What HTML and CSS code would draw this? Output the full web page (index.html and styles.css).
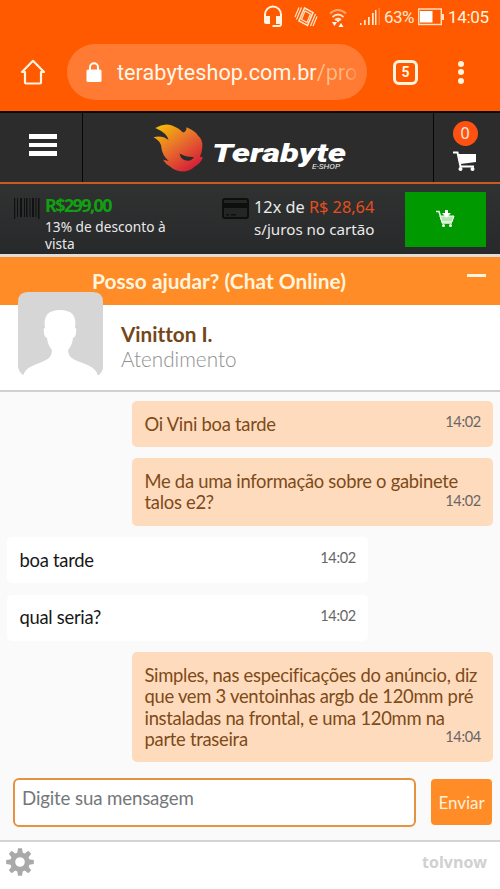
FILE: index.html
```html
<!DOCTYPE html>
<html lang="pt-BR">
<head>
<meta charset="utf-8">
<title>Terabyte Shop</title>
<link rel="stylesheet" href="styles.css">
</head>
<body>
<div class="browser">
  <div class="status">
    <svg class="st-head" width="20" height="23" viewBox="0 0 20 23"><path d="M2 14V9.500a8 8 0 0 1 16 0V19q0 2-2 2H9.500" fill="none" stroke="#fff4df" stroke-width="2"/><path d="M1 11h6v8H3q-2 0-2-2zM13 11h6v8h-6z" fill="#fff4df"/></svg>
    <svg class="st-vib" width="24" height="22" viewBox="0 0 24 22" fill="none" stroke="#ffe5c9" stroke-width="1.200"><path d="M10.500 2 19 6.500 13.500 19.500 5 15z" stroke-width="1.600"/><path d="M11 5 16.500 8 13 16.500 7.500 13.500zM7.500 1.500 2.500 13.500M5 1.500 1 11M16.500 20 21.500 8M19 20 23 10.500"/></svg>
    <svg class="st-wifi" width="18" height="22" viewBox="0 0 18 22" fill="none" stroke="#ffe5c9" stroke-width="1.700"><path d="M1 5.500q8-7 16 0" opacity=".55"/><path d="M3.500 9q5.500-5 11 0M6 12q3-2.500 6 0"/><path d="M3 14h5l-2.500 4zM9.500 19l2.500-4 2.500 4zM7 12h4l-2 2.500z" fill="#fff" stroke="none"/></svg>
    <svg class="st-sig" width="20" height="18" viewBox="0 0 20 18" fill="#ffe8d0"><path d="M0 15h1.500v2H0zM4 12h1.700v5H4zM8 9h1.700v8H8zM12 5h1.700v12H12zM15 2h1.500v15H15z"/><path d="M18.500 0H20v17h-1.500z" opacity=".3"/></svg>
    <span class="pct">63%</span>
    <svg class="st-bat" width="26" height="18" viewBox="0 0 26 18"><rect x=".7" y="1" width="22.600" height="15.500" fill="none" stroke="#ffe0c0" stroke-width="1.400"/><path d="M2 3h12.500v11.500H2z" fill="#fff"/><path d="M24 6h2v6h-2z" fill="#ffe0c0"/></svg>
    <span class="clock">14:05</span>
  </div>
  <div class="toolbar">
    <svg class="home" width="26" height="26" viewBox="0 0 26 26" fill="none" stroke="#fff4df" stroke-width="2.200" stroke-linejoin="round" stroke-linecap="round"><path d="M2 13 13 1.800 24 13h-3v10.500q0 1-1 1H6q-1 0-1-1V13z"/></svg>
    <div class="pill">
      <svg width="16" height="21" viewBox="0 0 16 21"><path d="M4 9V5.300a4 4 0 0 1 8 0V9" fill="none" stroke="#fff" stroke-width="2"/><rect x=".5" y="7.500" width="15" height="12.500" rx="1.500" fill="#fff"/></svg>
      <span class="url">terabyteshop.com.br<i>/pro</i></span>
    </div>
    <span class="tabs">5</span>
    <span class="dots"><b></b><b></b><b></b></span>
  </div>
</div>
<div class="site">
  <div class="menu"><span class="burger"><b></b><b></b><b></b></span></div>
  <div class="brand">
    <svg width="196" height="52" viewBox="0 0 196 52">
      <defs><linearGradient id="fire" x1="0" y1="0" x2=".75" y2="1"><stop offset="0" stop-color="#f8c800"/><stop offset=".5" stop-color="#e8702c"/><stop offset="1" stop-color="#d51c38"/></linearGradient></defs>
      <path d="M2.300 5Q11-.5 19 2.500 26 5 30 9.500 34 8.500 33.300 4.300 42 7.500 45 12.500 50 17 49.300 24 49 30 47 33.500L50 34.500Q47 41 41.700 43.500 37 48.500 29 48.500 22 48 17 43.500 12.500 41 10 36.700L15.700 38Q9 32 8.500 25 8 18 .5 14.300 9 12 15.500 17 14 10 2.300 5z" fill="url(#fire)"/>
      <path d="M26.500 30.500q7 4 14.500 3.500-2 3.500-6 3.700-7 0-8.500-7.200z" fill="#292a2b"/>
      <text class="wordmark" x="59" y="39" textLength="134" lengthAdjust="spacingAndGlyphs">Terabyte</text>
      <text class="eshop" x="159" y="45.500" textLength="28" lengthAdjust="spacingAndGlyphs">E-SHOP</text>
    </svg>
  </div>
  <div class="cart">
    <span class="count">0</span>
    <svg width="24" height="21" viewBox="0 0 24 21"><path d="M0 1.500h4.500l3 14H21" fill="none" stroke="#fff" stroke-width="2"/><path d="M5.500 3H23v8L7.500 13z" fill="#fff"/><circle cx="7.500" cy="18" r="2" fill="#fff"/><circle cx="19.500" cy="18" r="2" fill="#fff"/></svg>
  </div>
</div>
<div class="offer">
  <svg class="barcode" width="26" height="21" viewBox="0 0 26 21"><path d="M0 0h1.200v21H0zM3 0h1v19H3zM6 0h2v19H6zM10 0h1v19h-1zM12 0h1.500v19H12zM15.500 0h1v19h-1zM18 0h2v19h-2zM21.500 0h1v19h-1zM24 0h1.500v21H24z" fill="#101112"/></svg>
  <div class="cash"><strong>R$299,00</strong><span>13% de desconto à<br>vista</span></div>
  <svg class="card" width="27" height="21" viewBox="0 0 27 21"><rect x="1" y="1" width="25" height="19" rx="2" fill="#242525" stroke="#0d0e0e" stroke-width="2"/><path d="M1 5h25v5H1zM4 16h3v1.500H4zM9 16h5v1.500H9z" fill="#0d0e0e"/></svg>
  <div class="parcel">12x de <em>R$ 28,64</em><br><span>s/juros no cartão</span></div>
  <div class="buy"><svg width="20" height="18" viewBox="0 0 20 18"><path d="M0 1.500h3l3.500 11.500H16" fill="none" stroke="#e9ffe5" stroke-width="1.600"/><path d="M4 6h14l-2 6H6z" fill="#b5e5b0" stroke="#fff" stroke-width="1"/><path d="M9 0h3v3h3l-4.500 5L6 3h3z" fill="#fff"/><circle cx="7.500" cy="15.500" r="1.500" fill="#fff"/><circle cx="14.500" cy="15.500" r="1.500" fill="#fff"/></svg></div>
</div>
<div class="chat-title"><span>Posso ajudar? (Chat Online)</span><b></b></div>
<div class="agent">
  <svg class="avatar" width="85" height="84" viewBox="0 0 85 84"><path d="M10 0h65q10 0 10 10v65q0 4-4 8H5q-5-4-5-9V10Q0 0 10 0z" fill="#d6d6d6"/><path d="M5 84c2-9 12-11 21-15q8-3 8-11-4-4-5-12-3-1-3-6-1-4 1-4-3-18 15-18 18 0 15 18 2 0 1 4 0 5-3 6-1 8-5 12 0 7 7 10c9 4 21 6 23 16z" fill="#fff"/></svg>
  <div class="who"><strong>Vinitton I.</strong><span>Atendimento</span></div>
</div>
<div class="chat">
  <div class="msg me">Oi Vini boa tarde<time>14:02</time></div>
  <div class="msg me long">Me da uma informação sobre o gabinete<br>talos e2?<time>14:02</time></div>
  <div class="msg">boa tarde<time>14:02</time></div>
  <div class="msg">qual seria?<time>14:02</time></div>
  <div class="msg me long">Simples, nas especificações do anúncio, diz<br>que vem 3 ventoinhas argb de 120mm pré<br>instaladas na frontal, e uma 120mm na<br>parte traseira<time>14:04</time></div>
  <div class="compose"><div class="field">Digite sua mensagem</div><div class="send">Enviar</div></div>
</div>
<div class="foot">
  <svg width="28" height="28" viewBox="-14 -14 28 28" fill="#a9a9a9"><circle r="7.300" fill="none" stroke="#a9a9a9" stroke-width="5"/><g id="t"><path d="M-2.800-9-2-13.800H2L2.800-9zM-2.800 9-2 13.800H2L2.800 9zM-9-2.800-13.800-2V2L-9 2.800zM9-2.800 13.800-2V2L9 2.800z"/></g><use href="#t" transform="rotate(45)"/></svg>
  <span>tolvnow</span>
</div>
</body>
</html>
```
FILE: styles.css
```css
* { box-sizing: border-box; }
body { margin: 0; width: 500px; height: 889px; overflow: hidden; background: #fff; font-family: Lato, sans-serif; display: flex; flex-direction: column; }
body > div { flex-shrink: 0; }
svg { display: block; flex: none; }

.browser { height: 111px; background: #ff5a00; font-family: Roboto, sans-serif; color: #fff4df; }
.status { height: 44px; padding: 5px 0 0 263px; display: flex; align-items: flex-start; }
.st-vib { margin: 1px 0 0 11px; }
.st-wifi { margin: 3px 0 0 11px; }
.st-sig { margin: 3px 0 0 13px; }
.pct, .clock { font-size: 17px; line-height: 25px; white-space: nowrap; }
.pct { width: 30px; margin-left: 4px; letter-spacing: -.6px; color: #ffe9cf; }
.st-bat { margin: 3px 0 0 4px; }
.clock { margin-left: 4px; letter-spacing: -.3px; }
.toolbar { display: flex; align-items: center; height: 56px; padding-left: 20px; }
.pill { width: 300px; height: 56px; margin-left: 21px; padding-left: 19px; border-radius: 28px; background: #ff7a33; display: flex; align-items: center; }
.url { width: 239px; margin-left: 15px; overflow: hidden; white-space: nowrap; font-size: 21.6px; line-height: 30px; padding-top: 2px; color: #fff8e8; letter-spacing: .05px; }
.url i { font-style: normal; background: linear-gradient(90deg, #ffc18c, #ffb47c 75%, #ff8a4a); background-clip: text; color: transparent; }
.tabs { width: 25px; height: 25px; margin-left: 26px; border: 3px solid #fff4df; border-radius: 6px; text-align: center; font-size: 14px; line-height: 19px; font-weight: 700; }
.dots { display: flex; flex-direction: column; gap: 2.500px; margin-left: 40px; }
.dots b { width: 6px; height: 6px; border-radius: 50%; background: #fff4df; }

.site { height: 73px; border-top: 2px solid #0d0b0a; border-bottom: 2px solid #c95a20; background: #2c2c2c; display: flex; }
.menu { width: 83px; border-right: 1px solid #080808; padding: 21px 0 0 29px; }
.burger { display: flex; flex-direction: column; gap: 4px; width: 28px; }
.burger b { height: 4.700px; background: #fff; }
.brand { width: 351px; padding: 10px 0 0 70px; border-right: 1px solid #080808; }
.wordmark { font: italic 900 25px Roboto, sans-serif; fill: #fff; }
.eshop { font: italic 400 7px Roboto, sans-serif; fill: #eee; }
.cart { width: 66px; padding: 8px 4px 0 0; display: flex; flex-direction: column; align-items: center; gap: 5px; }
.count { width: 25px; height: 25px; border-radius: 50%; background: #ff5212; color: #ffe9d8; font: 16px/25px "Noto Sans", sans-serif; text-align: center; }

.offer { height: 73px; background: linear-gradient(#303131, #28292a); border-bottom: 3px solid #e3ddd6; display: flex; align-items: flex-start; padding: 8px 0 0 14px; font-family: "Noto Sans", sans-serif; color: #e9e9e9; }
.barcode { margin-top: 6px; }
.cash { width: 182px; padding-left: 5px; }
.cash strong { display: block; color: #11a011; font-size: 18px; line-height: 26px; letter-spacing: -1.600px; }
.cash span { display: block; font-size: 13.700px; line-height: 17px; white-space: nowrap; }
.card { margin-top: 6px; }
.parcel { width: 151px; margin-top: 4px; padding-left: 5px; font-size: 16.300px; line-height: 22px; white-space: nowrap; }
.parcel em { font-style: normal; color: #e4501c; }
.parcel span { font-size: 15.200px; }
.buy { width: 81px; height: 55px; margin-left: 5px; background: #009a00; display: flex; justify-content: center; padding-top: 18px; }

.chat-title { height: 48px; background: #ff8c26; padding-left: 92px; display: flex; color: #fff5df; font-weight: 700; font-size: 20.900px; line-height: 48px; }
.chat-title span { width: 375px; }
.chat-title b { width: 19px; height: 3px; margin-top: 17px; background: #fff5df; }
.agent { height: 87px; border-bottom: 2px solid #d0d0d0; padding-left: 18px; display: flex; background: #fff; }
.avatar { margin-top: -13px; }
.who { padding: 17px 0 0 18px; }
.who strong, .who span { display: block; font-size: 20.700px; line-height: 25px; font-variant-ligatures: none; }
.who strong { color: #744619; }
.who span { color: #8f8f8f; font-weight: 300; font-size: 20.700px; }

.chat { height: 450px; padding: 9px 7px 0; background: #fafafa; border-bottom: 2px solid #d4d4d4; display: flex; flex-direction: column; }
.msg { position: relative; width: 361px; padding: 12.500px 12.500px 11.900px; margin-bottom: 11.500px; border-radius: 5px; background: #fff; color: #171717; font-size: 18.400px; letter-spacing: -.28px; line-height: 21.500px; white-space: nowrap; }
.me { align-self: flex-end; background: #ffdbbd; color: #7d4a19; }
.msg time { position: absolute; right: 12px; top: 11px; color: #666; font-size: 14.500px; line-height: 20px; }
.long time { top: auto; bottom: 15px; }
.compose { display: flex; padding: 4px 1px 0 6px; gap: 15px; }
.field { width: 404px; height: 49px; border: 2px solid #e6923f; border-radius: 6px; background: #fff; color: #74777a; font-size: 18.700px; letter-spacing: -.15px; line-height: 36px; padding-left: 7px; }
.send { width: 61px; height: 46px; margin-top: 1px; border-radius: 4px; background: #ff8c26; color: #fff0d9; font-size: 17px; line-height: 48px; text-align: center; }
.foot { display: flex; justify-content: space-between; padding: 6px 13px 0 6px; }
.foot span { font: 700 16px/28px "Open Sans", sans-serif; color: #d0d0d0; }
```
